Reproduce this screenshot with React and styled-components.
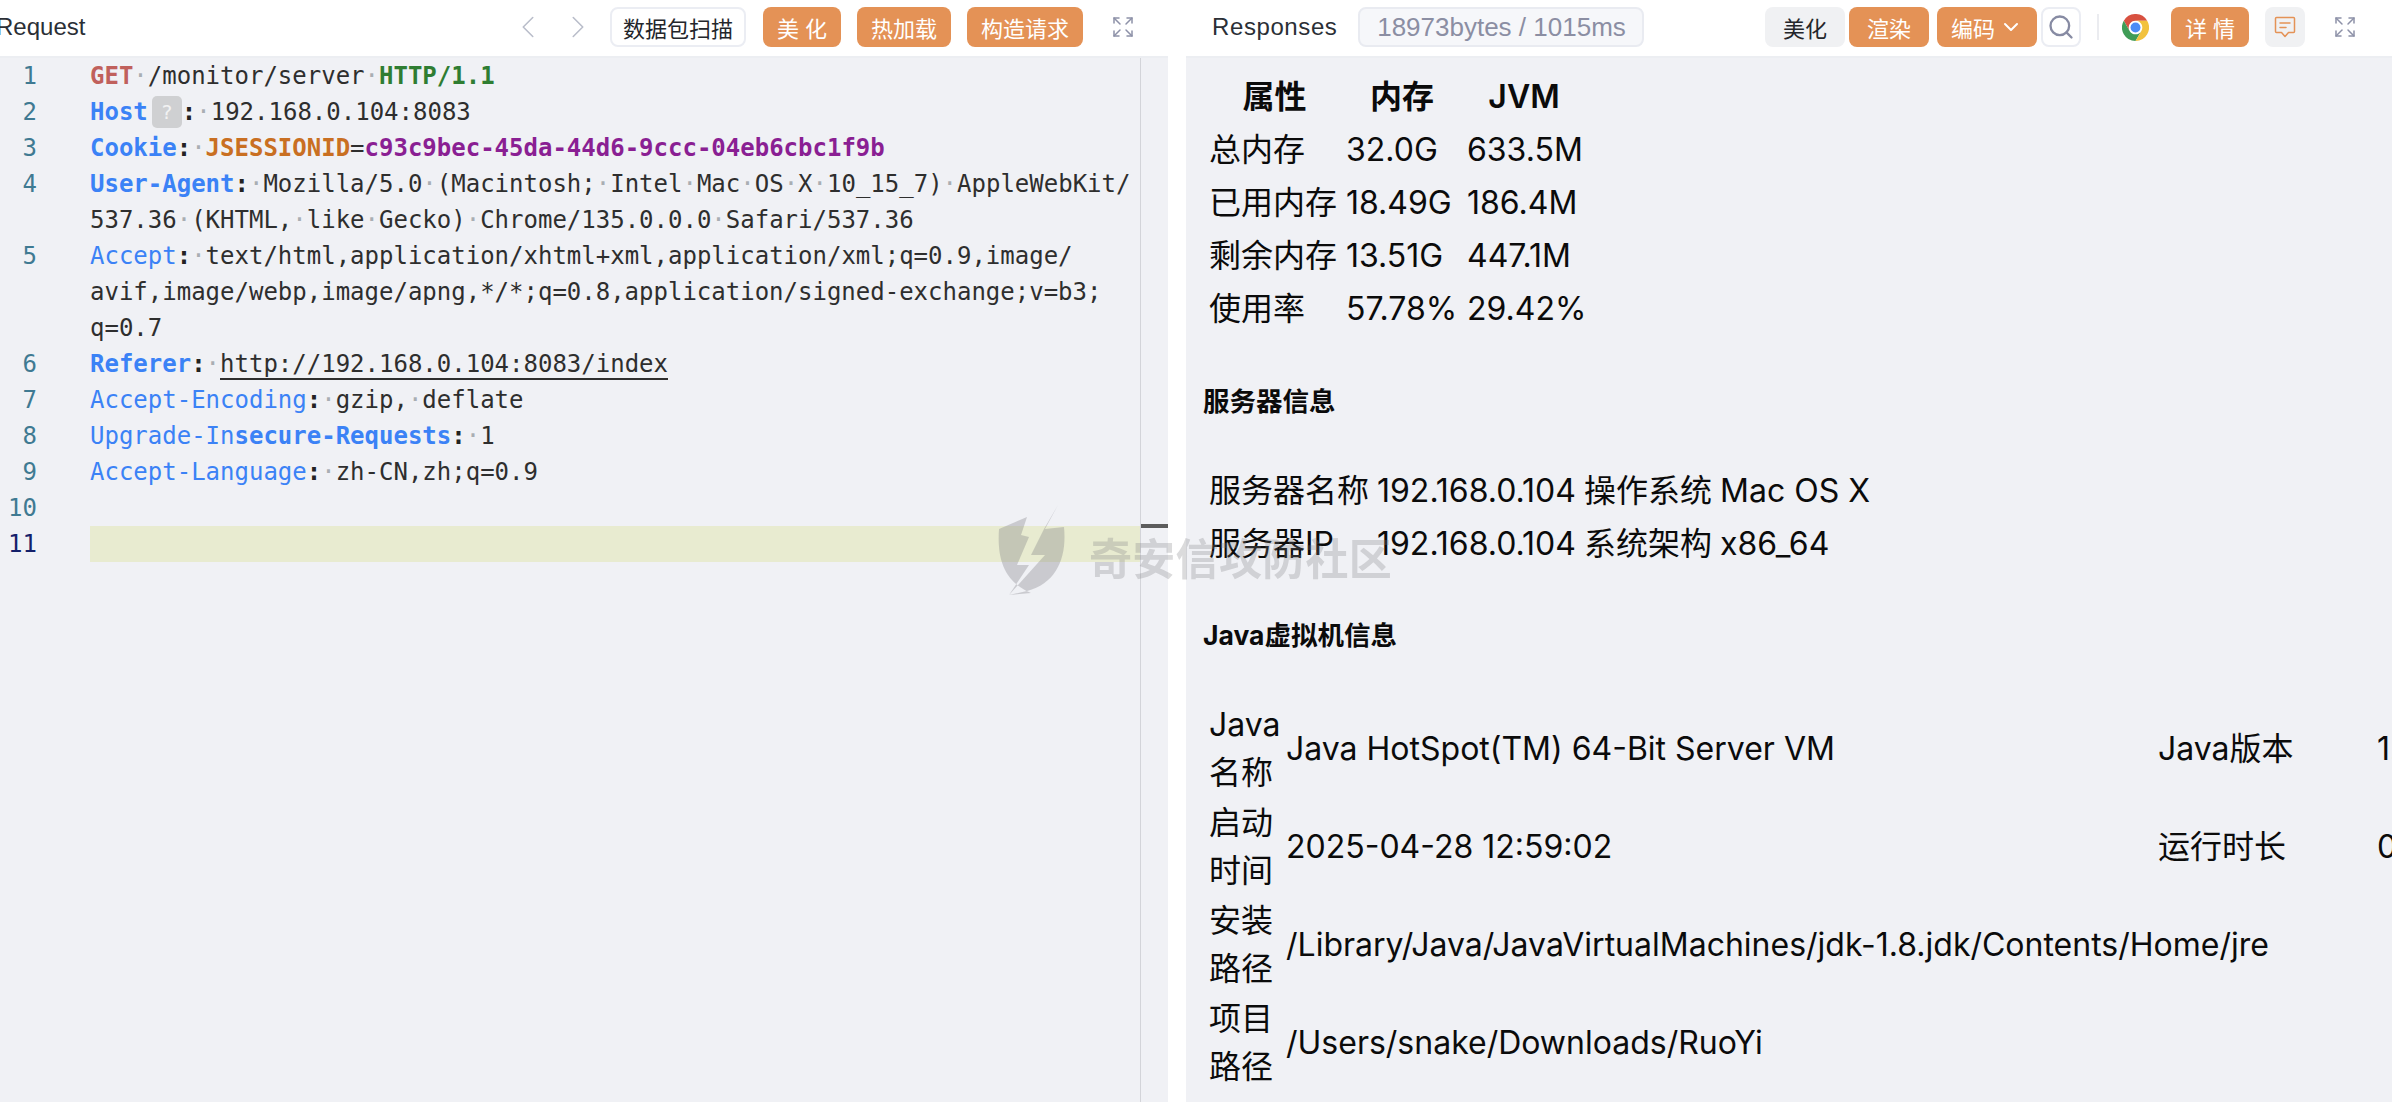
import styled, { createGlobalStyle } from "styled-components";
import { ChevronDown, ChevronLeft, ChevronRight, Expand, Search } from "lucide-react";

const GlobalStyle = createGlobalStyle`
  html, body {
    margin: 0;
    padding: 0;
    background: #fff;
    overflow: hidden;
  }
  * {
    box-sizing: border-box;
  }
`;

const UI_FONT = `"Liberation Sans", "Noto Sans CJK SC", sans-serif`;

const Page = styled.div`
  position: relative;
  display: flex;
  width: 2392px;
  height: 1102px;
  overflow: hidden;
  font-family: ${UI_FONT};
`;

const LeftPanel = styled.section`
  display: flex;
  flex-direction: column;
  width: 1168px;
  height: 100%;
`;

const RightPanel = styled.section`
  display: flex;
  flex-direction: column;
  width: 1206px;
  height: 100%;
  margin-left: 18px;
  overflow: hidden;
`;

const Toolbar = styled.header`
  display: flex;
  flex: none;
  align-items: center;
  height: 58px;
  padding-bottom: 6px;
  padding-top: 4px;
  padding-left: ${(p) => p.$left}px;
  padding-right: ${(p) => p.$right}px;
  background: #fff;
  border-bottom: 2px solid #eceef2;
`;

const PanelTitle = styled.span`
  font-size: 24px;
  letter-spacing: ${(p) => p.$spacing || 0}px;
  color: #2b2f36;
  margin-left: ${(p) => p.$offset || 0}px;
`;

const Spacer = styled.div`
  flex: 1;
`;

const NavArrows = styled.div`
  display: flex;
  gap: 12px;
  margin-right: 13px;
  color: #b9bdca;
`;

const Btn = styled.div`
  display: flex;
  flex: none;
  align-items: center;
  justify-content: center;
  gap: 4px;
  width: ${(p) => p.$w}px;
  height: 40px;
  margin-left: ${(p) => p.$gap || 0}px;
  border-radius: 8px;
  font-size: 22px;
  white-space: pre;
  color: ${(p) => (p.$kind === "primary" ? "#fff" : "#24262b")};
  background: ${(p) =>
    p.$kind === "primary" ? "#e49256" : p.$kind === "soft" ? "#f0f1f3" : "#fff"};
  border: ${(p) => (p.$kind === "outline" ? "2px solid #ebedf3" : "none")};
`;

const Badge = styled.div`
  display: flex;
  align-items: center;
  justify-content: center;
  width: 286px;
  height: 40px;
  margin-left: 21px;
  border-radius: 8px;
  background: #f6f7fa;
  border: 2px solid #e9ebf1;
  color: #8b8ea3;
  font-size: 26px;
`;

const Divider = styled.div`
  width: 2px;
  height: 26px;
  margin-left: 16px;
  background: #ebecf0;
`;

const ChromeWrap = styled.div`
  display: flex;
  margin-left: 23px;
`;

const ExpandIcon = styled(Expand)`
  flex: none;
  margin-left: ${(p) => p.$gap}px;
  color: #8d91a8;
`;

const EditorArea = styled.div`
  display: flex;
  flex: 1;
  background: #f0f1f5;
`;

const Editor = styled.div`
  width: 1141px;
  border-right: 1px solid #d3d4d9;
  font-family: "DejaVu Sans Mono", monospace;
  font-size: 24px;
  line-height: 36px;
`;

const Ruler = styled.div`
  position: relative;
  flex: 1;
`;

const RulerMark = styled.div`
  position: absolute;
  top: 466px;
  left: 0;
  right: 0;
  height: 4px;
  background: #5c5c5c;
`;

const Row = styled.div`
  display: flex;
  height: 36px;
  white-space: pre;
`;

const LineNo = styled.span`
  flex: none;
  width: 37px;
  margin-right: 53px;
  text-align: right;
  color: ${(p) => (p.$active ? "#14206a" : "#3f7a92")};
`;

const Code = styled.span`
  flex: 1;
  color: #2e2e2e;
  background: ${(p) => (p.$active ? "#e8ebd0" : "transparent")};
`;

const Dot = styled.span`
  color: #a9aeb3;
`;

const Method = styled.span`
  color: #c0605c;
  font-weight: 700;
`;

const Proto = styled.span`
  color: #2f7d32;
  font-weight: 700;
`;

const Key = styled.span`
  color: #3b82f6;
  font-weight: ${(p) => (p.$bold ? 700 : 400)};
`;

const Punct = styled.span`
  color: #222;
  font-weight: 700;
`;

const CookieName = styled.span`
  color: #c96f22;
  font-weight: 700;
`;

const CookieValue = styled.span`
  color: #8a1f93;
  font-weight: 700;
`;

const LinkText = styled.span`
  border-bottom: 2px solid #2e2e2e;
`;

const HintChip = styled.span`
  display: inline-block;
  width: 30px;
  height: 32px;
  margin-left: 4px;
  margin-right: 0;
  border-radius: 5px;
  background: #cfd0d2;
  color: #f2f2f2;
  font-size: 20px;
  line-height: 32px;
  text-align: center;
  vertical-align: top;
  margin-top: 2px;
`;

const ResponseBody = styled.div`
  flex: 1;
  padding: 12px 0 0 17px;
  background: #f0f1f5;
  color: #0b0b0b;
`;

const DataTable = styled.table`
  table-layout: fixed;
  width: ${(p) => p.$width}px;
  border-collapse: collapse;
  margin-left: 6px;
  font-family: Inter, "Noto Sans CJK SC", sans-serif;
  font-size: 32px;
  line-height: 48px;
`;

const HeadCell = styled.th`
  width: ${(p) => p.$w}px;
  height: 53px;
  padding: 0 ${(p) => p.$shift || 0}px 0 0;
  font-weight: 600;
  text-align: center;
`;

const Cell = styled.td`
  width: ${(p) => p.$w}px;
  height: ${(p) => p.$h || 53}px;
  padding: 0;
  white-space: ${(p) => (p.$wrap ? "normal" : "nowrap")};
  vertical-align: middle;
`;

const SectionTitle = styled.h3`
  margin: ${(p) => p.$top}px 0 ${(p) => p.$bottom}px;
  font-family: Inter, "Noto Sans CJK SC", sans-serif;
  font-size: 26.5px;
  line-height: 36px;
  font-weight: 700;
`;

const Watermark = styled.div`
  position: absolute;
  left: 997px;
  top: 505px;
  display: flex;
  align-items: center;
  gap: 24px;
  pointer-events: none;
  filter: blur(0.6px);
`;

const WatermarkText = styled.span`
  margin-top: 12px;
  font-size: 43px;
  font-weight: 700;
  letter-spacing: 0.3px;
  color: rgba(125, 125, 130, 0.28);
`;

const ChromeLogo = () => (
  <svg width="27" height="27" viewBox="0 0 24 24">
    <path d="M1.6 6 6.8 15A6 6 0 0 1 12 6H22.4A12 12 0 0 0 1.6 6Z" fill="#d85140" />
    <path d="M1.6 6A12 12 0 0 0 12 24L17.2 15A6 6 0 0 1 6.8 15Z" fill="#3f9c57" />
    <path d="M22.4 6H12A6 6 0 0 1 17.2 15L12 24A12 12 0 0 0 22.4 6Z" fill="#f2c23e" />
    <circle cx="12" cy="12" r="5.6" fill="#fff" />
    <circle cx="12" cy="12" r="4.4" fill="#4c8bf5" />
  </svg>
);

const NoteIcon = () => (
  <svg width="24" height="24" viewBox="0 0 24 24" fill="none" stroke="#e49256" strokeWidth="1.5" strokeLinejoin="round" strokeLinecap="round">
    <path d="M3.5 2.5h17a1 1 0 0 1 1 1v13a1 1 0 0 1-1 1h-5l-3.5 4-3.5-4h-5a1 1 0 0 1-1-1v-13a1 1 0 0 1 1-1Z" />
    <path d="M7 8h10M7 12.5h6" />
  </svg>
);

const ShieldMark = () => (
  <svg width="68" height="90" viewBox="0 0 68 90">
    <path
      fillRule="evenodd"
      fill="rgba(120,122,128,0.32)"
      d="M30 12 2 24C0 52 6 76 34 88l-22 2 20-30H20L32 32 24 30ZM61 0 48 24 67 22C70 52 60 78 30 86L12 90 48 50H34L47 24Z"
    />
  </svg>
);

// · stands for a space shown by the editor
const s = <Dot>·</Dot>;

const rows = [
  { n: 1, code: <><Method>GET</Method>{s}/monitor/server{s}<Proto>HTTP/1.1</Proto></> },
  { n: 2, code: <><Key $bold>Host</Key><HintChip>?</HintChip><Punct>:</Punct>{s}192.168.0.104:8083</> },
  { n: 3, code: <><Key $bold>Cookie</Key><Punct>:</Punct>{s}<CookieName>JSESSIONID</CookieName>=<CookieValue>c93c9bec-45da-44d6-9ccc-04eb6cbc1f9b</CookieValue></> },
  { n: 4, code: <><Key $bold>User-Agent</Key><Punct>:</Punct>{s}Mozilla/5.0{s}(Macintosh;{s}Intel{s}Mac{s}OS{s}X{s}10_15_7){s}AppleWebKit/</> },
  { code: <>537.36{s}(KHTML,{s}like{s}Gecko){s}Chrome/135.0.0.0{s}Safari/537.36</> },
  { n: 5, code: <><Key>Accept</Key><Punct>:</Punct>{s}text/html,application/xhtml+xml,application/xml;q=0.9,image/</> },
  { code: <>avif,image/webp,image/apng,*/*;q=0.8,application/signed-exchange;v=b3;</> },
  { code: <>q=0.7</> },
  { n: 6, code: <><Key $bold>Referer</Key><Punct>:</Punct>{s}<LinkText>http://192.168.0.104:8083/index</LinkText></> },
  { n: 7, code: <><Key>Accept-Encoding</Key><Punct>:</Punct>{s}gzip,{s}deflate</> },
  { n: 8, code: <><Key>Upgrade-In</Key><Key $bold>secure-Requests</Key><Punct>:</Punct>{s}1</> },
  { n: 9, code: <><Key>Accept-Language</Key><Punct>:</Punct>{s}zh-CN,zh;q=0.9</> },
  { n: 10, code: null },
  { n: 11, code: null, active: true },
];

const memoryRows = [
  ["总内存", "32.0G", "633.5M"],
  ["已用内存", "18.49G", "186.4M"],
  ["剩余内存", "13.51G", "447.1M"],
  ["使用率", "57.78%", "29.42%"],
];

export default function App() {
  return (
    <Page>
      <GlobalStyle />
      <LeftPanel>
        <Toolbar $left={0} $right={33}>
          <PanelTitle $offset={-4}>Request</PanelTitle>
          <Spacer />
          <NavArrows>
            <ChevronLeft size={38} strokeWidth={1} />
            <ChevronRight size={38} strokeWidth={1} />
          </NavArrows>
          <Btn $kind="outline" $w={136}>数据包扫描</Btn>
          <Btn $kind="primary" $w={78} $gap={17}>美 化</Btn>
          <Btn $kind="primary" $w={94} $gap={16}>热加载</Btn>
          <Btn $kind="primary" $w={116} $gap={16}>构造请求</Btn>
          <ExpandIcon size={24} strokeWidth={1.5} $gap={28} />
        </Toolbar>
        <EditorArea>
          <Editor>
            {rows.map((row, i) => (
              <Row key={i}>
                <LineNo $active={row.active}>{row.n}</LineNo>
                <Code $active={row.active}>{row.code}</Code>
              </Row>
            ))}
          </Editor>
          <Ruler>
            <RulerMark />
          </Ruler>
        </EditorArea>
      </LeftPanel>

      <RightPanel>
        <Toolbar $left={26} $right={35}>
          <PanelTitle $spacing={0.6}>Responses</PanelTitle>
          <Badge>18973bytes / 1015ms</Badge>
          <Spacer />
          <Btn $kind="soft" $w={80}>美化</Btn>
          <Btn $kind="primary" $w={80} $gap={4}>渲染</Btn>
          <Btn $kind="primary" $w={100} $gap={8}>编码<ChevronDown size={24} strokeWidth={2} /></Btn>
          <Btn $kind="outline" $w={40} $gap={4}><Search size={28} strokeWidth={2} color="#878ba3" /></Btn>
          <Divider />
          <ChromeWrap><ChromeLogo /></ChromeWrap>
          <Btn $kind="primary" $w={78} $gap={22}>详 情</Btn>
          <Btn $kind="soft" $w={40} $gap={16}><NoteIcon /></Btn>
          <ExpandIcon size={24} strokeWidth={1.5} $gap={28} />
        </Toolbar>
        <ResponseBody>
          <DataTable $width={372}>
            <thead>
              <tr>
                <HeadCell $w={137} $shift={6}>属性</HeadCell>
                <HeadCell $w={121} $shift={9}>内存</HeadCell>
                <HeadCell $w={114}>JVM</HeadCell>
              </tr>
            </thead>
            <tbody>
              {memoryRows.map((cells) => (
                <tr key={cells[0]}>
                  {cells.map((text) => (
                    <Cell key={text}>{text}</Cell>
                  ))}
                </tr>
              ))}
            </tbody>
          </DataTable>

          <SectionTitle $top={48} $bottom={45}>服务器信息</SectionTitle>
          <DataTable $width={691}>
            <tbody>
              <tr>
                <Cell $w={168}>服务器名称</Cell>
                <Cell $w={207}>192.168.0.104</Cell>
                <Cell $w={136}>操作系统</Cell>
                <Cell $w={180}>Mac OS X</Cell>
              </tr>
              <tr>
                <Cell>服务器IP</Cell>
                <Cell>192.168.0.104</Cell>
                <Cell>系统架构</Cell>
                <Cell>x86_64</Cell>
              </tr>
            </tbody>
          </DataTable>

          <SectionTitle $top={47} $bottom={47}>Java虚拟机信息</SectionTitle>
          <DataTable $width={1248}>
            <tbody>
              <tr>
                <Cell $w={77} $h={98} $wrap>Java名称</Cell>
                <Cell $w={872} $h={98}>Java HotSpot(TM) 64-Bit Server VM</Cell>
                <Cell $w={219} $h={98}>Java版本</Cell>
                <Cell $w={80} $h={98}>1.8.0_111</Cell>
              </tr>
              <tr>
                <Cell $h={98} $wrap>启动时间</Cell>
                <Cell $h={98}>2025-04-28 12:59:02</Cell>
                <Cell $h={98}>运行时长</Cell>
                <Cell $h={98}>0天0小时</Cell>
              </tr>
              <tr>
                <Cell $h={98} $wrap>安装路径</Cell>
                <Cell $h={98} colSpan={3}>/Library/Java/JavaVirtualMachines/jdk-1.8.jdk/Contents/Home/jre</Cell>
              </tr>
              <tr>
                <Cell $h={98} $wrap>项目路径</Cell>
                <Cell $h={98} colSpan={3}>/Users/snake/Downloads/RuoYi</Cell>
              </tr>
            </tbody>
          </DataTable>
        </ResponseBody>
      </RightPanel>

      <Watermark>
        <ShieldMark />
        <WatermarkText>奇安信攻防社区</WatermarkText>
      </Watermark>
    </Page>
  );
}
